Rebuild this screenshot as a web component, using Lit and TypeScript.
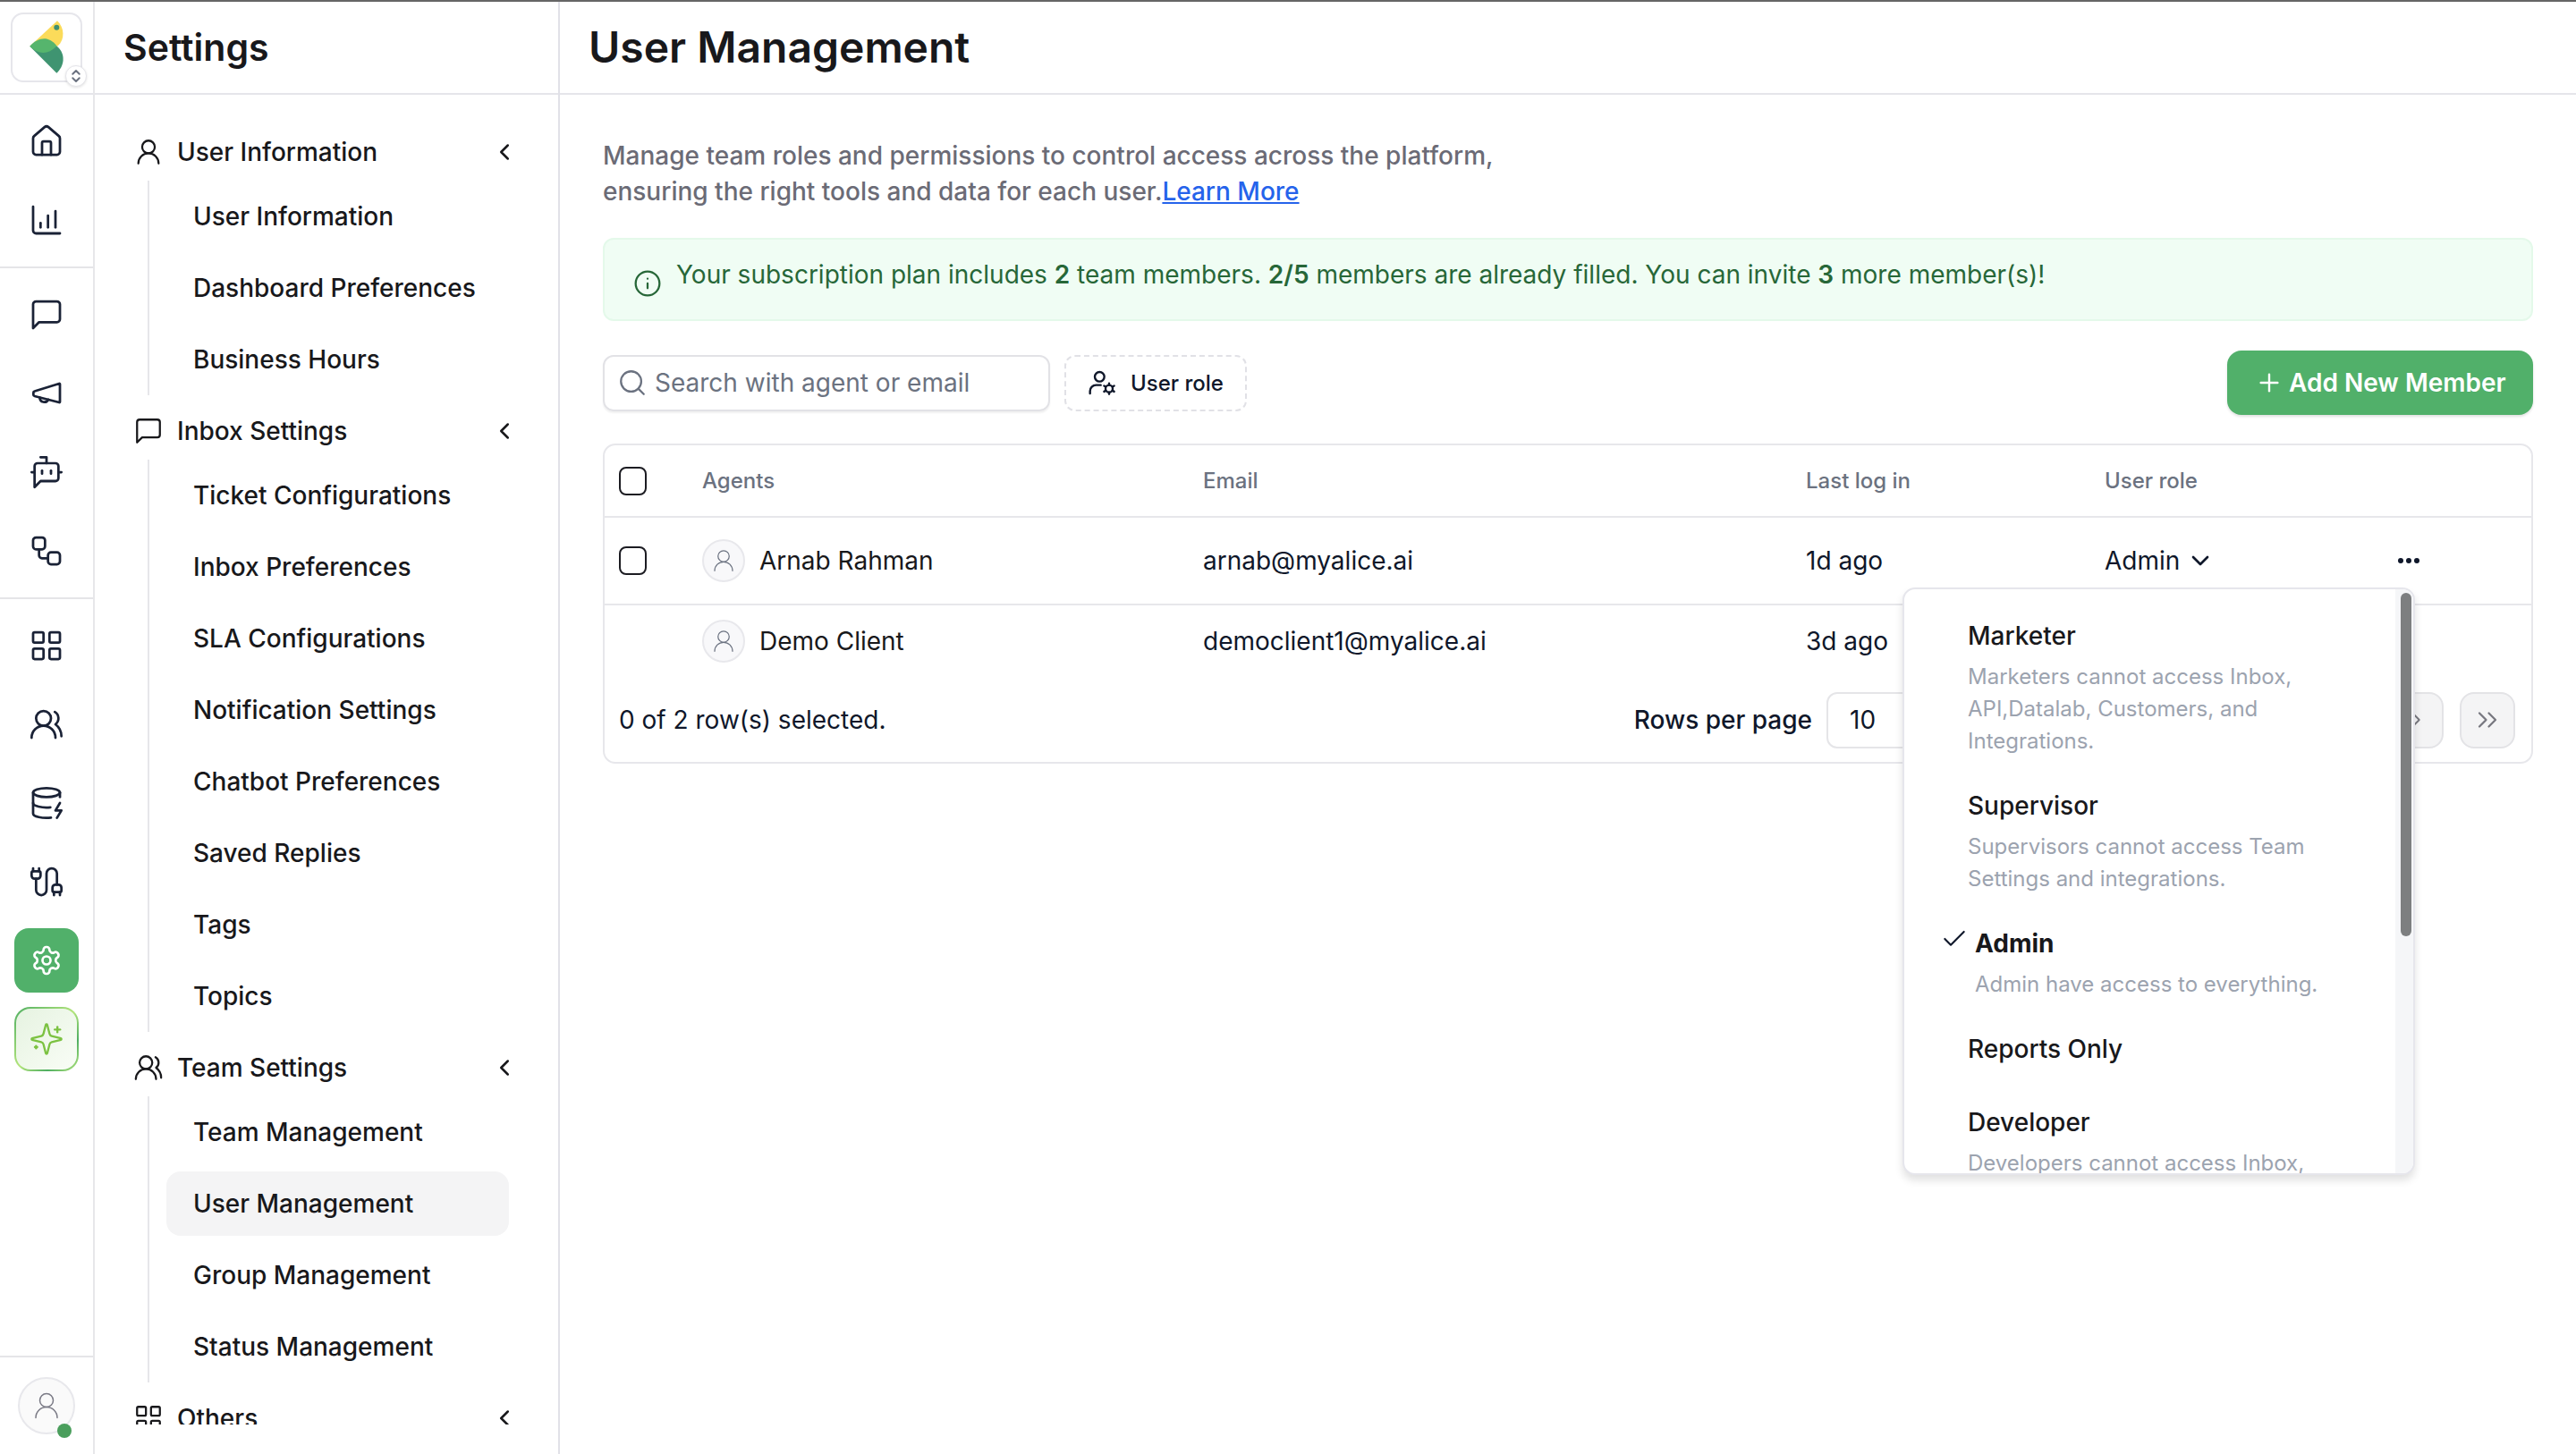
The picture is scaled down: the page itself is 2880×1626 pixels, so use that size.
import { LitElement, html, css, svg } from "lit";
import { customElement } from "lit/decorators.js";

const I = {
  home: svg`<path d="M3 10a2 2 0 0 1 .709-1.528l7-5.999a2 2 0 0 1 2.582 0l7 5.999A2 2 0 0 1 21 10v9a2 2 0 0 1-2 2H5a2 2 0 0 1-2-2z"/><path d="M15 21v-8a1 1 0 0 0-1-1h-4a1 1 0 0 0-1 1v8"/>`,
  chart: svg`<path d="M3 3v16a2 2 0 0 0 2 2h16"/><path d="M8 17v-3"/><path d="M13 17V9"/><path d="M18 17V6"/>`,
  chat: svg`<path d="M21 15a2 2 0 0 1-2 2H7l-4 4V5a2 2 0 0 1 2-2h14a2 2 0 0 1 2 2z"/>`,
  mega: svg`<path d="M21 5.8v11.8a.4.4 0 0 1-.5.4L4 13.8a1 1 0 0 1-.8-1v-1.3a1 1 0 0 1 .8-1L20.500 5.400a.4.4 0 0 1 .5.4z"/><path d="M7.500 14.800a3 3 0 0 0 5.700 1.300"/>`,
  bot: svg`<path d="M12 6V2H8"/><path d="m8 18-4 4V8a2 2 0 0 1 2-2h12a2 2 0 0 1 2 2v8a2 2 0 0 1-2 2Z"/><path d="M2 12h2"/><path d="M9 11v2"/><path d="M15 11v2"/><path d="M20 12h2"/>`,
  flow: svg`<rect x="3" y="3" width="8" height="8" rx="2"/><path d="M7 11v4a2 2 0 0 0 2 2h4"/><rect x="13" y="13" width="8" height="8" rx="2"/>`,
  grid: svg`<rect x="3" y="3" width="7" height="7" rx="1"/><rect x="14" y="3" width="7" height="7" rx="1"/><rect x="14" y="14" width="7" height="7" rx="1"/><rect x="3" y="14" width="7" height="7" rx="1"/>`,
  users: svg`<path d="M18 21a8 8 0 0 0-16 0"/><circle cx="10" cy="8" r="5"/><path d="M22 20c0-3.370-2-6.500-4-8a5 5 0 0 0-.45-8.300"/>`,
  db: svg`<ellipse cx="12" cy="5" rx="9" ry="3"/><path d="M3 5V19A9 3 0 0 0 15 21.840"/><path d="M21 5V8"/><path d="M21 12L18 17H22L19 22"/><path d="M3 12A9 3 0 0 0 14.590 14.870"/>`,
  cable: svg`<path d="M17 19a1 1 0 0 1-1-1v-2a2 2 0 0 1 2-2h2a2 2 0 0 1 2 2v2a1 1 0 0 1-1 1z"/><path d="M17 21v-2"/><path d="M19 14V6.500a1 1 0 0 0-7 0v11a1 1 0 0 1-7 0V10"/><path d="M21 21v-2"/><path d="M3 5V3"/><path d="M4 10a2 2 0 0 1-2-2V6a1 1 0 0 1 1-1h4a1 1 0 0 1 1 1v2a2 2 0 0 1-2 2z"/><path d="M7 5V3"/>`,
  gear: svg`<path d="M12.220 2h-.44a2 2 0 0 0-2 2v.18a2 2 0 0 1-1 1.730l-.43.25a2 2 0 0 1-2 0l-.15-.08a2 2 0 0 0-2.730.73l-.22.38a2 2 0 0 0 .73 2.730l.15.1a2 2 0 0 1 1 1.720v.51a2 2 0 0 1-1 1.740l-.15.09a2 2 0 0 0-.73 2.730l.22.38a2 2 0 0 0 2.730.73l.15-.08a2 2 0 0 1 2 0l.43.25a2 2 0 0 1 1 1.730V20a2 2 0 0 0 2 2h.44a2 2 0 0 0 2-2v-.18a2 2 0 0 1 1-1.730l.43-.25a2 2 0 0 1 2 0l.15.08a2 2 0 0 0 2.730-.73l.22-.39a2 2 0 0 0-.73-2.730l-.15-.08a2 2 0 0 1-1-1.740v-.5a2 2 0 0 1 1-1.740l.15-.09a2 2 0 0 0 .73-2.730l-.22-.38a2 2 0 0 0-2.730-.73l-.15.08a2 2 0 0 1-2 0l-.43-.25a2 2 0 0 1-1-1.730V4a2 2 0 0 0-2-2z"/><circle cx="12" cy="12" r="3"/>`,
  star: svg`<path d="M9.937 15.500A2 2 0 0 0 8.500 14.063l-6.135-1.582a.5.5 0 0 1 0-.962L8.500 9.936A2 2 0 0 0 9.937 8.500l1.582-6.135a.5.5 0 0 1 .963 0L14.063 8.500A2 2 0 0 0 15.500 9.937l6.135 1.581a.5.5 0 0 1 0 .964L15.500 14.063a2 2 0 0 0-1.437 1.437l-1.582 6.135a.5.5 0 0 1-.963 0z"/><path d="M19.300 3.800v3.600"/><path d="M17.500 5.600h3.600"/><path d="M5 16.600v1.600"/><path d="M4.200 17.400h1.600"/>`,
  user: svg`<circle cx="12" cy="8" r="5"/><path d="M20 21a8 8 0 0 0-16 0"/>`,
  left: svg`<path d="m15 18-6-6 6-6"/>`,
  down: svg`<path d="m6 9 6 6 6-6"/>`,
  info: svg`<circle cx="12" cy="12" r="10"/><path d="M12 16v-4"/><path d="M12 8h.01"/>`,
  search: svg`<path d="m21 21-4.340-4.340"/><circle cx="11" cy="11" r="8"/>`,
  userCog: svg`<circle cx="10" cy="7" r="4"/><path d="M2 21v-2a5 5 0 0 1 5-5h4"/><circle cx="18" cy="17" r="3"/><path d="M18 12.500V14"/><path d="M18 20v1.500"/><path d="M13.800 14.600l1.300.75"/><path d="M20.900 18.650l1.300.75"/><path d="M13.800 19.400l1.300-.75"/><path d="M20.900 15.350l1.300-.75"/>`,
  plus: svg`<path d="M5 12h14"/><path d="M12 5v14"/>`,
  check: svg`<path d="M20 6 9 17l-5-5"/>`,
  dbl: svg`<path d="m6 17 5-5-5-5"/><path d="m13 17 5-5-5-5"/>`,
  right: svg`<path d="m9 18 6-6-6-6"/>`,
  updown: svg`<path d="m7 9 5-5 5 5"/><path d="m7 15 5 5 5-5"/>`,
};

const ic = (p: unknown, cls: string) =>
  html`<svg class="ic ${cls}" viewBox="0 0 24 24" fill="none" stroke="currentColor" stroke-linecap="round" stroke-linejoin="round">${p}</svg>`;

const NAV = [
  { icon: I.user, title: "User Information", items: ["User Information", "Dashboard Preferences", "Business Hours"] },
  { icon: I.chat, title: "Inbox Settings", items: ["Ticket Configurations", "Inbox Preferences", "SLA Configurations", "Notification Settings", "Chatbot Preferences", "Saved Replies", "Tags", "Topics"] },
  { icon: I.users, title: "Team Settings", items: ["Team Management", "User Management", "Group Management", "Status Management"] },
  { icon: I.grid, title: "Others", items: [] as string[] },
];

const ROLES = [
  { name: "Marketer", desc: ["Marketers cannot access Inbox,", "API,Datalab, Customers, and", "Integrations."] },
  { name: "Supervisor", desc: ["Supervisors cannot access Team", "Settings and integrations."] },
  { name: "Admin", desc: ["Admin have access to everything."], on: true },
  { name: "Reports Only", desc: [] as string[] },
  { name: "Developer", desc: ["Developers cannot access Inbox,"] },
];

@customElement("app-root")
export class AppRoot extends LitElement {
  static styles = css`
    :host { display: block; width: 2880px; height: 1626px; overflow: hidden; background: #fff; font-family: Inter, "Liberation Sans", sans-serif; color: #18181b; }
    * { box-sizing: border-box; }
    .strip { height: 2px; background: #666; }
    .page { display: flex; height: 1624px; }
    .ic { display: block; flex: none; stroke-width: 1.8; }
    .i40 { width: 40px; height: 40px; stroke-width: 1.65; }
    .i36 { width: 36px; height: 36px; }
    .i34 { width: 34px; height: 34px; stroke-width: 1.6; }
    .i30 { width: 30px; height: 30px; stroke-width: 2; }
    .i32 { width: 32px; height: 32px; stroke-width: 1.8; }

    .rail { width: 106px; flex: none; border-right: 2px solid #e7e7ea; display: flex; flex-direction: column; }
    .logoWrap { height: 104px; border-bottom: 2px solid #e5e5ea; padding: 12px 0 0 12px; }
    .logo { position: relative; width: 80px; height: 78px; border: 2px solid #e6e6eb; border-radius: 14px; background: #fff; }
    .logo > svg { position: absolute; left: -14px; top: -16px; width: 120px; height: 120px; }
    .badge { position: absolute; left: 59px; top: 57px; width: 24px; height: 24px; border-radius: 50%; background: #fff; border: 1px solid #e5e5ea; box-shadow: 0 1px 3px rgba(0,0,0,.12); color: #6b7280; display: flex; align-items: center; justify-content: center; }
    .badge svg { width: 18px; height: 18px; stroke-width: 2.6; }
    .group { padding: 16px 16px; display: flex; flex-direction: column; gap: 16px; border-bottom: 2px solid #e5e5e8; }
    .group.last { border-bottom: none; }
    .ri { height: 72px; width: 72px; display: flex; align-items: center; justify-content: center; color: #1a2236; border-radius: 16px; }
    .ri.on { background: #51b06a; color: #fff; }
    .ri.ai { color: #7cc242; border: 2px solid transparent; border-radius: 18px; background: linear-gradient(135deg, #e6f3e1, #f9fdf6) padding-box, linear-gradient(135deg, #4fae62, #b4e57c 50%, #4fae62 75%, #b4e57c) border-box; }
    .ri.ai svg { stroke-width: 1.4; }
    .railBottom { margin-top: auto; border-top: 2px solid #e5e5e8; height: 110px; padding: 22px 0 0 20px; }
    .ava { position: relative; width: 64px; height: 64px; border-radius: 50%; background: #fafafa; border: 2px solid #e8e8ec; display: flex; align-items: center; justify-content: center; color: #7a7a85; }
    .ava svg { width: 36px; height: 36px; stroke-width: 1; }
    .dot { position: absolute; left: 42px; top: 50px; width: 16px; height: 16px; border-radius: 50%; background: #4a9e5c; }

    .nav { width: 520px; flex: none; border-right: 2px solid #e1e1e8; display: flex; flex-direction: column; }
    .head { height: 104px; border-bottom: 2px solid #e5e5ea; padding-left: 32px; display: flex; align-items: center; flex: none; }
    .h1 { font-size: 41px; font-weight: 600; color: #18181b; line-height: 1; }
    .scroll { height: 1487px; overflow: hidden; padding-top: 32px; flex: none; }
    .sec { margin-bottom: 8px; }
    .secHead { height: 64px; display: flex; align-items: center; padding-left: 43px; font-size: 28px; font-weight: 500; }
    .secHead > span { margin-left: 15px; flex: 1; }
    .secHead .chev { margin-right: 45px; width: 30px; height: 30px; stroke-width: 2; }
    .subs { margin-left: 59px; border-left: 2px solid #e6e6ea; }
    .sub { height: 80px; display: flex; align-items: center; padding-left: 49px; font-size: 28px; font-weight: 500; position: relative; }
    .sub.on::before { content: ""; position: absolute; left: 19px; top: 4px; width: 383px; height: 72px; border-radius: 16px; background: #f4f4f5; }
    .sub span { position: relative; }

    .main { flex: 1; min-width: 0; display: flex; flex-direction: column; }
    .main .head { padding-left: 32px; }
    .h1.big { font-size: 48px; }
    .content { padding: 48px 48px 0 48px; position: relative; flex: 1; }
    .desc { font-size: 28px; line-height: 40px; color: #6b6b76; font-weight: 500; }
    .desc a { color: #2563eb; text-decoration: underline; }
    .banner { margin-top: 32px; height: 93px; background: #f0fdf4; border: 2px solid #e4f9ea; border-radius: 12px; padding: 19px 0 0 32px; display: flex; color: #276738; font-size: 28px; line-height: 40px; font-weight: 400; }
    .banner svg { margin: 14px 0 0 0; width: 32px; height: 32px; stroke-width: 1.7; }
    .banner span { margin-left: 16px; }
    .banner b { font-weight: 600; }
    .bar { margin-top: 33px; display: flex; align-items: center; gap: 16px; height: 72px; }
    .search { width: 500px; height: 63px; border: 2px solid #e2e2e6; border-radius: 12px; box-shadow: 0 2px 2px rgba(0,0,0,.06); display: flex; align-items: center; padding-left: 14px; color: #6b7280; font-size: 28px; gap: 8px; }
    .role { width: 204px; height: 63px; border: 2px dashed #e1e1e6; border-radius: 12px; display: flex; align-items: center; padding-left: 24px; gap: 16px; font-size: 24px; font-weight: 500; color: #0f172a; }
    .add { margin-left: auto; width: 342px; height: 72px; border-radius: 16px; background: #51b06a; box-shadow: 0 2px 3px rgba(0,0,0,.12); color: #fff; display: flex; align-items: center; padding-left: 31px; gap: 6px; font-size: 28px; font-weight: 600; }
    .table { margin-top: 32px; height: 358px; border: 2px solid #e7e7eb; border-radius: 14px; }
    .row { display: grid; grid-template-columns: 109px 560px 674px 334px 328px 1fr; align-items: center; border-bottom: 2px solid #e7e7eb; font-size: 28px; color: #0f172a; }
    .row > :first-child { padding-left: 16px; }
    .row.th { height: 81px; font-size: 24px; font-weight: 500; color: #6b7280; }
    .row.r1 { height: 98px; }
    .row.r2 { height: 80px; border-bottom: none; }
    .cb { width: 31px; height: 32px; border: 2.500px solid #1c1c22; border-radius: 8px; display: block; }
    .agent { display: flex; align-items: center; gap: 16px; color: #18181b; }
    .mini { width: 48px; height: 48px; border-radius: 50%; background: #f8f8fa; border: 2px solid #e8e8ec; display: flex; align-items: center; justify-content: center; color: #6b7280; }
    .mini svg { width: 30px; height: 30px; stroke-width: 1; }
    .admin { display: flex; align-items: center; gap: 7px; }
    .admin svg { width: 32px; height: 32px; stroke-width: 2; }
    .dots { display: flex; gap: 3px; }
    .dots i { width: 6px; height: 6px; border-radius: 50%; background: #0f172a; }
    .foot { height: 96px; display: flex; align-items: center; padding: 0 18px 0 16px; font-size: 28px; color: #0f172a; }
    .rpp { margin-left: auto; font-weight: 500; }
    .sel { margin: 0 488px 0 16px; width: 140px; height: 63px; border: 2px solid #e5e5e8; border-radius: 12px; display: flex; align-items: center; padding-left: 24px; }
    .pg { width: 62px; height: 63px; border: 2px solid #e3e3e6; border-radius: 16px; background: #f4f4f5; color: #77777f; display: flex; align-items: center; justify-content: center; }
    .pg + .pg { margin-left: 18px; }
    .pg svg { stroke-width: 1.5; }

    .menu { position: absolute; left: 1501px; top: 551px; width: 573px; height: 657px; background: #fff; border: 2px solid #e6e6ec; border-radius: 14px; box-shadow: 0 6px 10px rgba(0,0,0,.12); overflow: hidden; padding-top: 16px; z-index: 2; }
    .track { position: absolute; right: 0; top: 0; bottom: 0; width: 20px; background: #f5f6f8; }
    .thumb { position: absolute; right: 2px; top: 4px; width: 12px; height: 384px; border-radius: 6px; background: #7d7f80; }
    .opt { padding: 16px 0 18px 71px; position: relative; }
    .opt.on { padding-left: 79px; }
    .opt.short { min-height: 81px; }
    .opt b { display: block; font-size: 28px; line-height: 40px; font-weight: 500; color: #18181b; margin-bottom: 8px; }
    .opt.on b { font-weight: 700; }
    .opt p { margin: 0; font-size: 24px; line-height: 36px; color: #9ca3af; }
    .tick { position: absolute; left: 40px; top: 15px; width: 32px; height: 32px; color: #0f172a; stroke-width: 1.6; }
  `;

  render() {
    const g1 = [I.home, I.chart];
    const g2 = [I.chat, I.mega, I.bot, I.flow];
    const g3 = [I.grid, I.users, I.db, I.cable];
    return html`
      <div class="strip"></div>
      <div class="page">
        <aside class="rail">
          <div class="logoWrap">
            <div class="logo">
              <svg viewBox="0 0 120 120">
                <path d="M33.300 51.700 64 23.300C72 31 73 44 64.500 51.500Z" fill="#fbdb5a"/>
                <path d="M33.300 51.700 63.300 81.700C72 74 74 60 63.500 51.500Z" fill="#3f9471"/>
                <path d="M33.300 51.700C43 41 55 40 63.500 51.500C53 62 43 61 33.300 51.700Z" fill="#56b56d"/>
                <circle cx="63.300" cy="30.700" r="3" fill="#3f8f70"/>
              </svg>
              <div class="badge">${ic(I.updown, "")}</div>
            </div>
          </div>
          <div class="group">${g1.map((p) => html`<div class="ri">${ic(p, "i40")}</div>`)}</div>
          <div class="group">${g2.map((p) => html`<div class="ri">${ic(p, "i40")}</div>`)}</div>
          <div class="group last">
            ${g3.map((p) => html`<div class="ri">${ic(p, "i40")}</div>`)}
            <div class="ri on">${ic(I.gear, "i36")}</div>
            <div class="ri ai">${ic(I.star, "i40")}</div>
          </div>
          <div class="railBottom"><div class="ava">${ic(I.user, "")}<i class="dot"></i></div></div>
        </aside>

        <section class="nav">
          <div class="head"><div class="h1">Settings</div></div>
          <div class="scroll">
            ${NAV.map((s) => html`
              <div class="sec">
                <div class="secHead">${ic(s.icon, "i34")}<span>${s.title}</span>${ic(I.left, "chev")}</div>
                ${s.items.length ? html`<div class="subs">
                  ${s.items.map((t) => html`<div class="sub ${t === "User Management" ? "on" : ""}"><span>${t}</span></div>`)}
                </div>` : ""}
              </div>`)}
          </div>
        </section>

        <main class="main">
          <div class="head"><div class="h1 big">User Management</div></div>
          <div class="content">
            <div class="desc">Manage team roles and permissions to control access across the platform,<br />ensuring the right tools and data for each user.<a>Learn More</a></div>
            <div class="banner">${ic(I.info, "")}<span>Your subscription plan includes <b>2</b> team members. <b>2/5</b> members are already filled. You can invite <b>3</b> more member(s)!</span></div>
            <div class="bar">
              <div class="search">${ic(I.search, "i34")}<span>Search with agent or email</span></div>
              <div class="role">${ic(I.userCog, "i32")}<span>User role</span></div>
              <div class="add">${ic(I.plus, "i32")}<span>Add New Member</span></div>
            </div>
            <div class="table">
              <div class="row th"><div><i class="cb"></i></div><div>Agents</div><div>Email</div><div>Last log in</div><div>User role</div><div></div></div>
              <div class="row r1">
                <div><i class="cb"></i></div>
                <div class="agent"><span class="mini">${ic(I.user, "")}</span>Arnab Rahman</div>
                <div>arnab@myalice.ai</div>
                <div>1d ago</div>
                <div class="admin">Admin ${ic(I.down, "")}</div>
                <div class="dots"><i></i><i></i><i></i></div>
              </div>
              <div class="row r2">
                <div></div>
                <div class="agent"><span class="mini">${ic(I.user, "")}</span>Demo Client</div>
                <div>democlient1@myalice.ai</div>
                <div>3d ago</div>
                <div></div>
                <div></div>
              </div>
              <div class="foot">
                <span>0 of 2 row(s) selected.</span>
                <span class="rpp">Rows per page</span>
                <span class="sel">10</span>
                <span class="pg">${ic(I.right, "i30")}</span>
                <span class="pg">${ic(I.dbl, "i36")}</span>
              </div>
            </div>
            <div class="menu">
              <div class="track"><div class="thumb"></div></div>
              ${ROLES.map((r) => html`
                <div class="opt ${r.on ? "on" : ""} ${r.desc.length ? "" : "short"}">
                  ${r.on ? ic(I.check, "tick") : ""}
                  <b>${r.name}</b>
                  ${r.desc.map((d) => html`<p>${d}</p>`)}
                </div>`)}
            </div>
          </div>
        </main>
      </div>
    `;
  }
}
